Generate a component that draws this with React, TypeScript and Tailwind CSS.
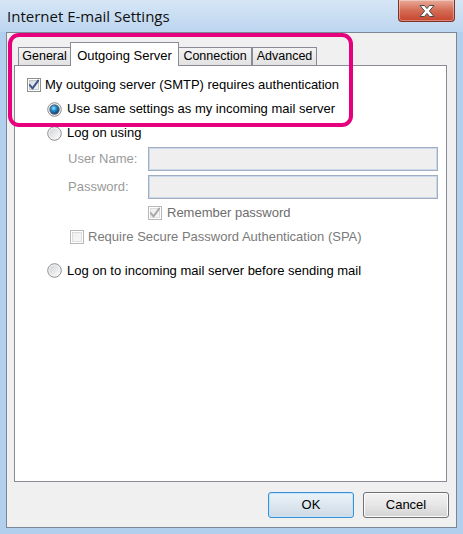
import React from 'react'

function CheckBox({ checked, disabled }: { checked?: boolean; disabled?: boolean }) {
  const border = disabled ? '#b8b8b8' : '#8e8f8f'
  const check = disabled ? '#a9a9a9' : '#3b5488'
  return (
    <svg width="14" height="14" viewBox="0 0 14 14" className="shrink-0">
      <defs>
        <linearGradient id={disabled ? 'cbd' : 'cbn'} x1="0" y1="0" x2="1" y2="1">
          <stop offset="0" stopColor={disabled ? '#eeeeee' : '#d4d8de'} />
          <stop offset="1" stopColor={disabled ? '#f8f8f8' : '#f7f7f7'} />
        </linearGradient>
      </defs>
      <rect x="0.5" y="0.5" width="13" height="13" fill="#fff" stroke={border} />
      <rect x="2.5" y="2.5" width="9" height="9" fill={`url(#${disabled ? 'cbd' : 'cbn'})`} stroke={disabled ? '#d6d6d6' : '#b8bcc3'} strokeWidth="0.8" />
      {checked && (
        <path d="M2.8 7 L5.5 10.4 L11.2 2.6" fill="none" stroke={check} strokeWidth="2" strokeLinecap="round" strokeLinejoin="round" />
      )}
    </svg>
  )
}

function Radio({ checked }: { checked?: boolean }) {
  return (
    <svg width="15" height="15" viewBox="0 0 15 15" className="shrink-0">
      <defs>
        <linearGradient id="rbg" x1="0" y1="0" x2="1" y2="1">
          <stop offset="0" stopColor="#d0d3d8" />
          <stop offset="1" stopColor="#fbfbfb" />
        </linearGradient>
        <radialGradient id="rdot" cx="0.4" cy="0.35" r="0.7">
          <stop offset="0" stopColor="#a6e8ff" />
          <stop offset="0.4" stopColor="#2596dc" />
          <stop offset="1" stopColor="#0a3468" />
        </radialGradient>
      </defs>
      <circle cx="7.5" cy="7.5" r="6.8" fill="#f4f4f4" stroke="#8a8c8f" strokeWidth="1" />
      <circle cx="7.5" cy="7.5" r="5.2" fill={checked ? '#5f6670' : 'url(#rbg)'} />
      {checked && <circle cx="7.5" cy="7.5" r="4.2" fill="url(#rdot)" />}
    </svg>
  )
}

function CloseButton() {
  return (
    <div className="w-[57px] h-[22px] rounded-b-[4px] border border-t-0 border-[#7d3225] bg-gradient-to-b from-[#e9ab9b] via-[#d46b55] to-[#c8432c] flex items-center justify-center shadow-[inset_0_0_0_1px_rgba(255,255,255,0.35)]">
      <svg width="18" height="14" viewBox="0 0 18 14">
        <path
          d="M2 1.5 H6.5 L9 4.6 L11.5 1.5 H16 L11.4 7 L16 12.5 H11.5 L9 9.4 L6.5 12.5 H2 L6.6 7 Z"
          fill="#ffffff"
          stroke="#4a4a4a"
          strokeWidth="1"
          strokeLinejoin="round"
        />
      </svg>
    </div>
  )
}

const tabs = [
  { label: 'General', w: 'w-[53px]' },
  { label: 'Outgoing Server', w: 'w-[109px]', active: true },
  { label: 'Connection', w: 'w-[74px]' },
  { label: 'Advanced', w: 'w-[65px]' },
]

export default function App() {
  return (
    <div className="relative w-[463px] h-[534px] overflow-hidden bg-[#b2cfee] flex flex-col font-['Liberation_Sans',Arial,sans-serif] text-[13px] text-black">
      {/* Title bar */}
      <div className="h-[32px] shrink-0 flex items-start justify-between pl-[7px] pr-[8px] bg-gradient-to-b from-[#d6e6f6] to-[#bdd5ef]">
        <span className="mt-[6px] text-[15px] leading-[20px] text-[#101010] font-['Segoe_UI','Open_Sans',sans-serif]">
          Internet E-mail Settings
        </span>
        <CloseButton />
      </div>

      {/* Client area */}
      <div className="mx-[6px] h-[496px] shrink-0 border border-[#7c8795] bg-[#f0f0f0] flex flex-col pt-[9px] pl-[7px] pr-[7px]">
        {/* Tabs */}
        <div className="flex items-end h-[23px] pl-[4px] text-[12.5px]">
          {tabs.map((t) =>
            t.active ? (
              <div
                key={t.label}
                className={`${t.w} relative z-10 h-[24px] -mb-px -mx-px bg-white border border-b-0 border-[#898c95] flex items-start justify-center pt-[3px] text-[13px]`}
              >
                {t.label}
              </div>
            ) : (
              <div
                key={t.label}
                className={`${t.w} h-[18px] bg-gradient-to-b from-[#f3f3f3] to-[#e2e2e2] border border-b-0 border-[#898c95] flex items-center justify-center leading-none`}
              >
                {t.label}
              </div>
            )
          )}
        </div>

        {/* Panel */}
        <div className="w-[433px] h-[417px] border border-[#898c95] bg-white flex flex-col pt-[7px] pl-[12px]">
          <div className="h-[24px] flex items-center gap-[4px]">
            <CheckBox checked />
            <span>My outgoing server (SMTP) requires authentication</span>
          </div>
          <div className="h-[24px] flex items-center gap-[5px] pl-[20px]">
            <Radio checked />
            <span>Use same settings as my incoming mail server</span>
          </div>
          <div className="h-[24px] flex items-center gap-[5px] pl-[20px]">
            <Radio />
            <span>Log on using</span>
          </div>
          <div className="mt-[2px] h-[24px] flex items-center pl-[41px] pr-[8px]">
            <span className="w-[80px] text-[#9a9a9a]">User Name:</span>
            <div className="flex-1 h-[24px] border border-[#a2aebd] shadow-[inset_0_0_0_1px_#cad9eb] bg-[#efefef]" />
          </div>
          <div className="mt-[4px] h-[24px] flex items-center pl-[41px] pr-[8px]">
            <span className="w-[80px] text-[#9a9a9a]">Password:</span>
            <div className="flex-1 h-[24px] border border-[#a2aebd] shadow-[inset_0_0_0_1px_#cad9eb] bg-[#efefef]" />
          </div>
          <div className="mt-[7px] h-[14px] flex items-center gap-[5px] pl-[121px] text-[#6d6d6d]">
            <CheckBox checked disabled />
            <span>Remember password</span>
          </div>
          <div className="mt-[9px] h-[15px] flex items-center gap-[4px] pl-[43px] text-[#7a7a7a]">
            <CheckBox disabled />
            <span>Require Secure Password Authentication (SPA)</span>
          </div>
          <div className="mt-[19px] h-[15px] flex items-center gap-[5px] pl-[20px]">
            <Radio />
            <span>Log on to incoming mail server before sending mail</span>
          </div>
        </div>

        {/* Buttons */}
        <div className="mt-[10px] flex justify-end gap-[9px]">
          <button className="w-[86px] h-[26px] rounded-[3px] border border-[#3c8fd0] bg-gradient-to-b from-[#ecf3f9] via-[#dde7f0] to-[#cdd9e4] shadow-[inset_0_0_0_1px_#bfe4fb] text-black">
            OK
          </button>
          <button className="w-[86px] h-[26px] rounded-[3px] border border-[#707070] bg-gradient-to-b from-[#f3f3f3] via-[#e6e6e6] to-[#d3d3d3] shadow-[inset_0_0_0_1px_#fcfcfc] text-black">
            Cancel
          </button>
        </div>
      </div>

      {/* Annotation highlight */}
      <div className="absolute left-[8px] top-[33px] w-[345px] h-[94px] rounded-[11px] border-[4px] border-[#e6007e] pointer-events-none" />
    </div>
  )
}
